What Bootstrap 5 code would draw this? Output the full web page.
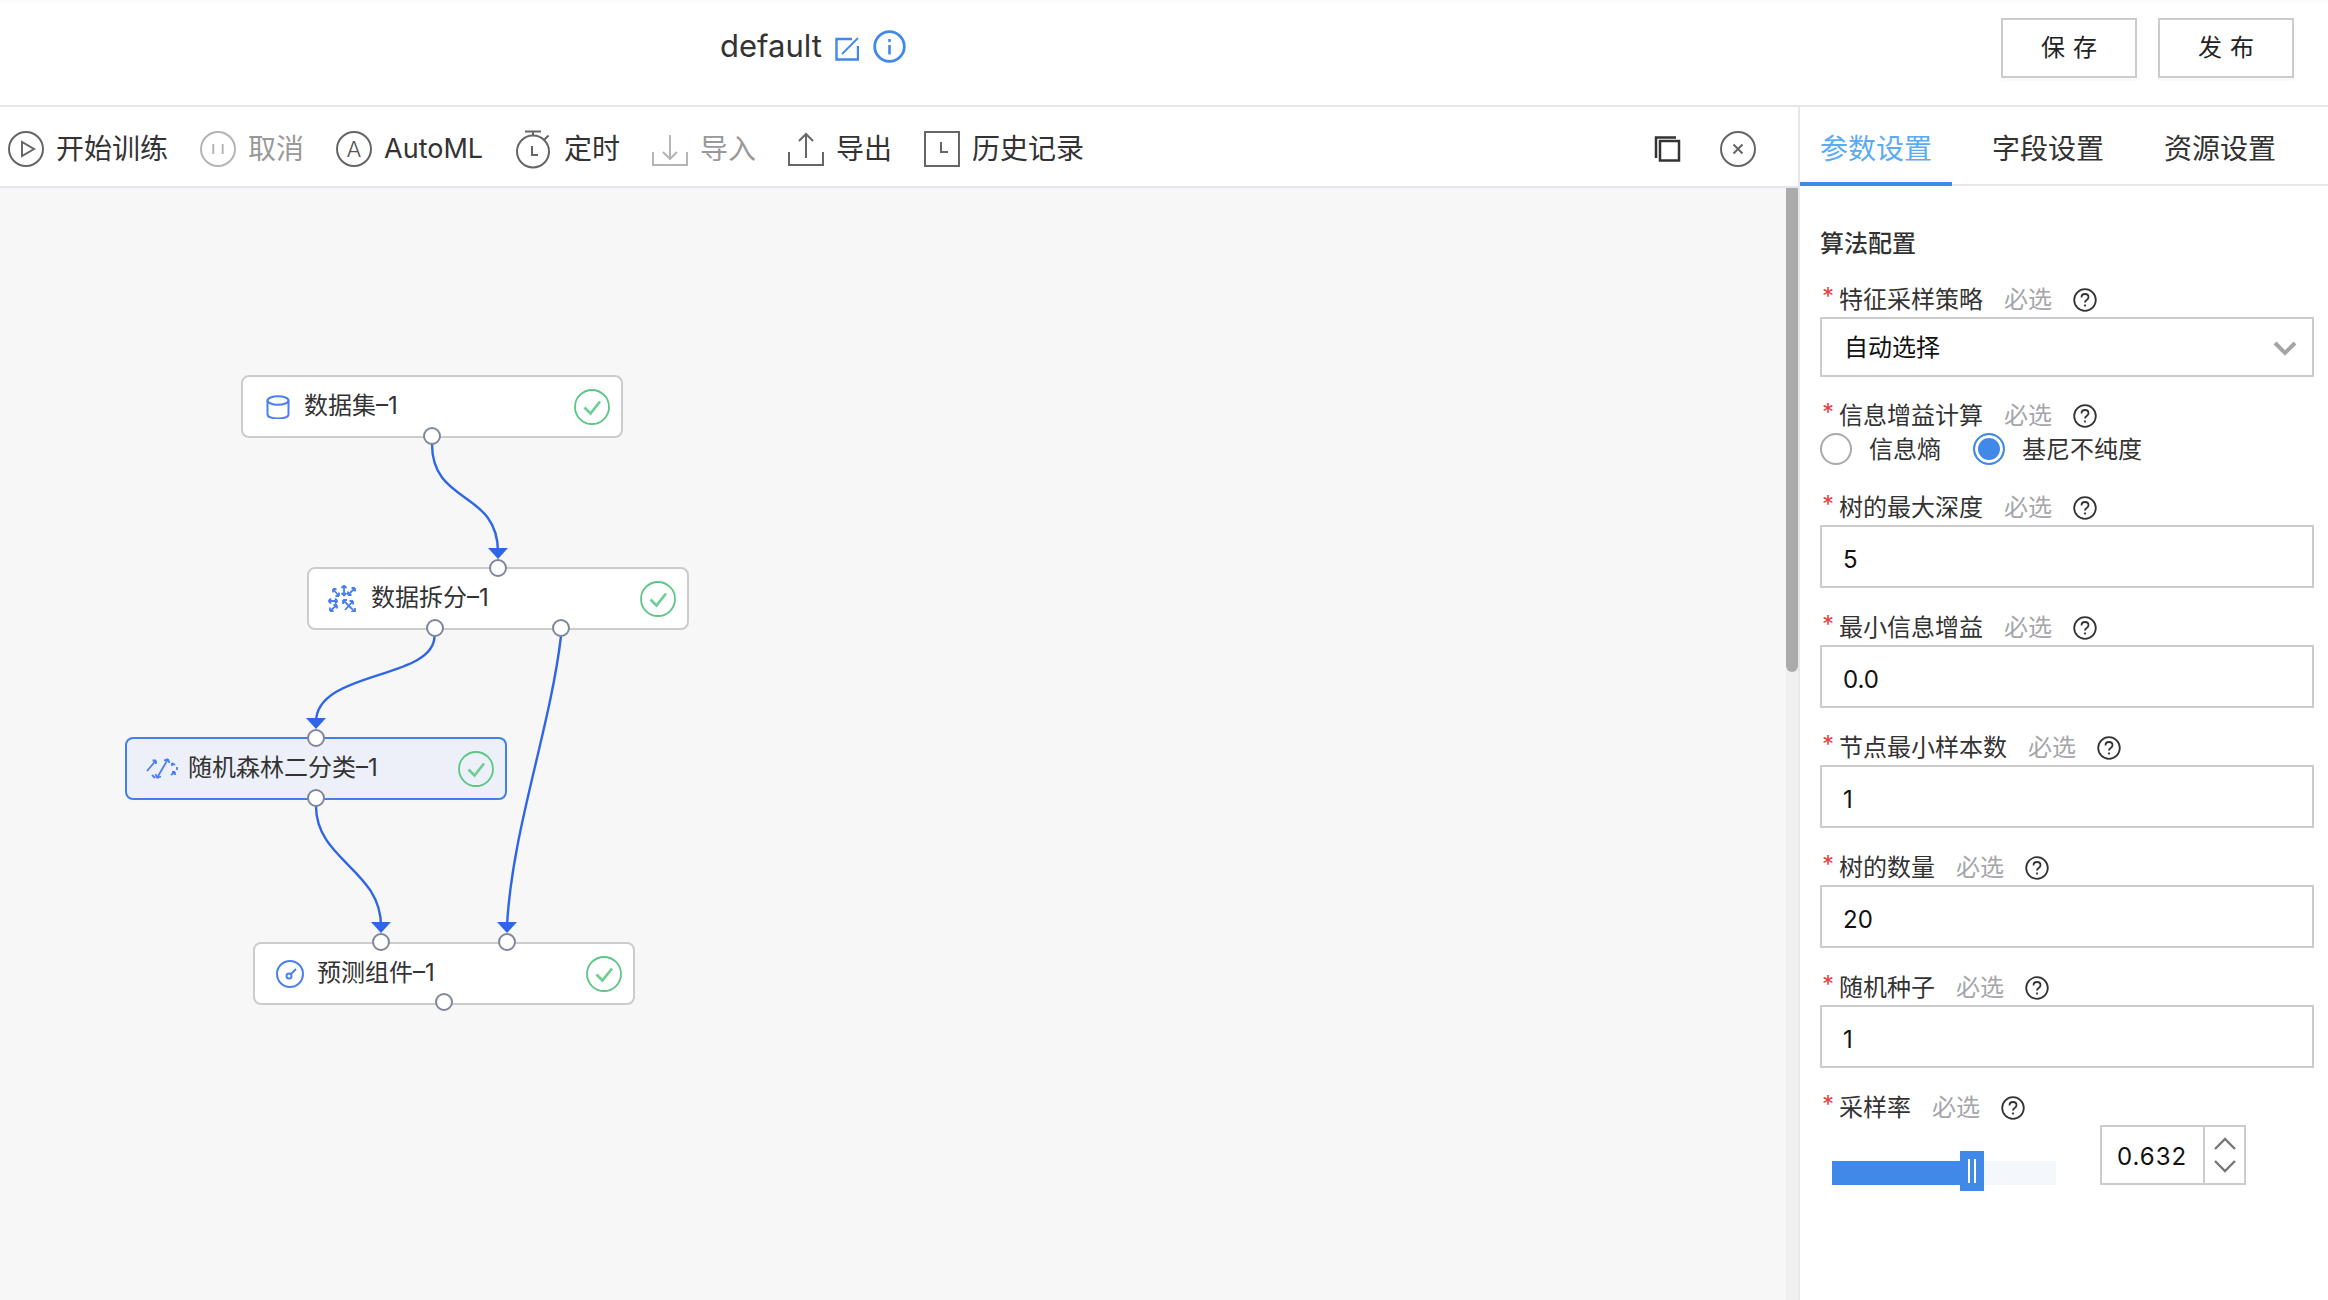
<!DOCTYPE html>
<html lang="zh"><head><meta charset="utf-8"><title>default</title>
<link href="https://cdn.jsdelivr.net/npm/bootstrap@5.3.0/dist/css/bootstrap.min.css" rel="stylesheet">
<style>
html,body{height:100%;overflow:hidden}
body{font-family:Inter,"Noto Sans CJK SC",sans-serif;font-size:24px;color:#333;background:#fff}
.app-top{height:107px;border-bottom:2px solid #e4e6ec;padding-right:34px;border-top:3px solid #fcfcfc;position:relative}
.top-gap{gap:21px}
.doc-title{position:absolute;left:720px;top:25px;font-size:31px;line-height:36px;color:#333}
.doc-edit{position:absolute;left:835px;top:34px}
.doc-info{position:absolute;left:873px;top:27px}
.top-btn{width:136px;height:60px;border:2px solid #ccc;border-radius:0;font-size:24px;color:#222;background:#fff;letter-spacing:8px;padding:0 0 0 8px;box-shadow:0 3px 0 #fafafa;margin-top:15px}
.work-area{height:1193px}
.left-side{width:1798px;flex:none}
.tool-row{height:81px;border-bottom:2px solid #e4e6ec;padding:5px 42px 0 8px}
.tool-item{font-size:28px;color:#333;gap:12px;margin-right:32px;white-space:nowrap}
.tool-off{color:#999}
.tool-latin{font-size:27px;margin-right:1px}
.tool-end{gap:39px}
.canvas-box{position:relative;height:1112px;background:#f7f7f7;overflow:hidden}
.edge-layer{position:absolute;left:0;top:-188px}
.flow-node{position:absolute;width:382px;height:63px;background:#fff;border:2px solid #ccc;border-radius:8px;display:flex;align-items:center;padding:0 11px 0 21px;font-size:24px;color:#333;line-height:1}
.flow-node.is-on{border-color:#4080ea;background:#edf0f8}
.flow-node.pad-a{padding-left:23px}
.flow-node.pad-b{padding-left:19px}
.flow-node .node-name{margin-left:14px;flex:1;position:relative;top:-1px}
.flow-port{position:absolute;width:18px;height:18px;border:2px solid #80879c;border-radius:50%;background:#fff;transform:translate(-50%,-50%);z-index:2}
.scroll-track{position:absolute;left:1786px;top:0;width:12px;height:100%;background:#f0f0f0}
.scroll-thumb{height:484px;background:#ababab;border-radius:0 0 6px 6px}
.side-panel{width:530px;flex:none;border-left:2px solid #e8e8e8}
.tab-row{height:79px;border-bottom:2px solid #e8e8e8;gap:20px;flex-wrap:nowrap}
.tab-link{width:152px;height:79px;text-align:center;font-size:28px;line-height:80px;padding:2px 0 0;color:#333;border-bottom:4px solid transparent;margin-bottom:-2px}
.tab-link:hover{color:#333}
.tab-link.active,.tab-link.active:hover{color:#5aabf5;border-bottom-color:#4089e8}
.form-pane{padding:0 14px 0 20px}
.pane-title{font-size:24px;font-weight:500;line-height:36px;color:#333;margin:40px 0 19px}
.field-label{height:36px;font-size:24px;line-height:36px;color:#333;padding-top:2px}
.req-mark{color:#e53f3f;width:19px;flex:none;font-size:24px;line-height:36px;position:relative;top:-3px;padding-left:2px}
.must-mark{color:#a5a5aa;margin-left:21px;margin-right:21px}
.form-control.field-box{height:63px;border:2px solid #ccc;border-radius:0;font-size:24px;color:#111;padding:6px 21px 0;margin-bottom:21px;box-shadow:none}
.form-control.pick-box{height:60px;padding:1px 15px 0 22px;margin-bottom:20px;display:flex;align-items:center;justify-content:space-between;color:#111;border:2px solid #ccc;border-radius:0;font-size:24px}
.radio-row{height:32px;margin-bottom:24px;line-height:32px}
.radio-row .form-check-input{width:32px;height:32px;margin:0;border:2px solid #aaa;flex:none;background-image:none}
.radio-row .form-check-input:checked{background:#4089e8;border-color:#4089e8;box-shadow:inset 0 0 0 3px #fff;background-image:none}
.radio-row label{margin:2px 32px 0 17px}
.rate-row{height:86px}
.rate-track{position:absolute;left:12px;top:36px;width:224px;height:24px;background:#f4f8fd}
.rate-fill{height:100%;background:#4089e8}
.rate-thumb{position:absolute;left:128px;top:-10px;width:24px;height:40px;background:#4089e8;display:flex;justify-content:center;gap:4px;padding:8px 0}
.rate-thumb i{display:block;width:2px;height:24px;background:#fff}
.rate-spin{position:absolute;left:280px;top:0;width:146px;height:60px;border:2px solid #ccc;display:flex}
.rate-val{width:103px;border-right:2px solid #ccc;font-size:24px;line-height:60px;color:#111;padding-left:15px;letter-spacing:1px}
.rate-arrows{flex:1;display:flex;flex-direction:column;align-items:center;justify-content:center;gap:8px}
</style></head>
<body>
<header class="app-top d-flex justify-content-end top-gap">
  <span class="doc-title">default</span>
  <svg class="doc-edit" width="24" height="24" viewBox="0 0 24 24" fill="none" stroke="#4089e8" stroke-width="2.400"><path d="M17 2H1.500V22.500H23V9"/><path d="M23 1 7 17" stroke-width="1.800"/></svg>
  <svg class="doc-info" width="33" height="33" viewBox="0 0 33 33" fill="none" stroke="#4089e8" stroke-width="2.800"><circle cx="16.500" cy="16.500" r="14.800"/><path d="M16.500 15v9.500M16.500 9v3" stroke-width="2.600"/></svg>
  <button class="btn top-btn" type="button">保存</button>
  <button class="btn top-btn" type="button">发布</button>
</header>
<main class="work-area d-flex">
  <section class="left-side d-flex flex-column">
    <div class="tool-row d-flex align-items-center">
      <span class="tool-item d-flex align-items-center"><svg width="36" height="36" viewBox="0 0 36 36" fill="none" stroke="#666" stroke-width="2"><circle cx="18" cy="18" r="17"/><path d="M14 11v14l12-7z"/></svg>开始训练</span>
      <span class="tool-item tool-off d-flex align-items-center"><svg width="36" height="36" viewBox="0 0 36 36" fill="none" stroke="#b5b5b5" stroke-width="2"><circle cx="18" cy="18" r="17"/><path d="M13.300 13v10M22.700 13v10"/></svg>取消</span>
      <span class="tool-item d-flex align-items-center"><svg width="36" height="36" viewBox="0 0 36 36" fill="none" stroke="#666" stroke-width="2"><circle cx="18" cy="18" r="17"/><text x="18" y="25.500" text-anchor="middle" font-family="Inter,sans-serif" font-size="22" font-weight="300" fill="#555" stroke="none">A</text></svg><span class="tool-latin">AutoML</span></span>
      <span class="tool-item d-flex align-items-center"><svg width="36" height="39" viewBox="0 0 36 39" fill="none" stroke="#666" stroke-width="2"><circle cx="17" cy="21.500" r="16"/><path d="M9 1.500h16M17 1.500v4M28 10l4.500-4.500M16 16v9h6"/></svg>定时</span>
      <span class="tool-item tool-off d-flex align-items-center"><svg width="36" height="36" viewBox="0 0 36 36" fill="none" stroke="#b5b5b5" stroke-width="2"><path d="M1 21v13h34V21"/><path d="M18 4v24M11 21l7 7 7-7"/></svg>导入</span>
      <span class="tool-item d-flex align-items-center"><svg width="36" height="36" viewBox="0 0 36 36" fill="none" stroke="#666" stroke-width="2"><path d="M1 21v13h34V21"/><path d="M18 27V3M11 10l7-7 7 7"/></svg>导出</span>
      <span class="tool-item d-flex align-items-center"><svg width="36" height="36" viewBox="0 0 36 36" fill="none" stroke="#666" stroke-width="2"><rect x="1" y="1" width="34" height="34"/><path d="M17 11v10h7"/></svg>历史记录</span>
      <span class="tool-end d-flex align-items-center ms-auto">
        <svg width="27" height="26" viewBox="0 0 27 26" fill="none" stroke="#333" stroke-width="2.500"><path d="M2 22V1.500H22"/><rect x="6" y="5" width="19" height="19.500"/></svg>
        <svg width="36" height="36" viewBox="0 0 36 36" fill="none" stroke="#666" stroke-width="2"><circle cx="18" cy="18" r="17"/><path d="M13.500 13.500l9 9M22.500 13.500l-9 9"/></svg>
      </span>
    </div>
    <div class="canvas-box">
      <svg class="edge-layer" width="1798" height="1300" viewBox="0 0 1798 1300" fill="none" stroke="#2f66e8" stroke-width="2.400">
        <path d="M432 444C432 505 498 490 498 552"/>
        <path d="M434.500 636C434.500 680 316 670 316 722"/>
        <path d="M561 636C550 730 512 830 507 926"/>
        <path d="M316 806C316 860 381 870 381 926"/>
        <g fill="#2f66e8" stroke="none">
          <path d="M488 548h20l-10 11z"/><path d="M306 718h20l-10 11z"/><path d="M371 922h20l-10 11z"/><path d="M497 922h20l-10 11z"/>
        </g>
      </svg>

      <div class="flow-node pad-a" style="left:241px;top:187px">
        <svg width="24" height="24" viewBox="0 0 24 24" fill="none" stroke="#4a7ff0" stroke-width="2"><ellipse cx="12" cy="5.500" rx="10.500" ry="4.300"/><path d="M1.500 5.500v14c0 2.400 4.700 3.900 10.500 3.900s10.500-1.500 10.500-3.900v-14"/></svg>
        <span class="node-name">数据集–1</span>
        <svg width="36" height="36" viewBox="0 0 36 36" fill="none" stroke="#5cc785" stroke-width="1.800"><circle cx="18" cy="18" r="17"/><path d="M10.500 18.500l6 6 9.500-12" stroke="#6dcf92" stroke-width="2.800"/></svg>
      </div>
      <div class="flow-node pad-b" style="left:307px;top:379px">
        <svg width="28" height="27" viewBox="0 0 28 27" fill="none" stroke="#4a7ff0" stroke-width="1.800"><path d="M5 4l6 7M5 4v3.500M5 4h3.500M11 11H7.500M11 11V7.500M16 0.500v10M13.500 3 16 .5 18.500 3M13.500 8l2.500 2.500L18.500 8M27 3l-7 7M27 3h-3.500M27 3v3.500M20 10h3.500M20 10V6.500M0.500 16h9M0.500 16 3 13.500M0.500 16 3 18.500M9.500 16 7 13.500M9.500 16 7 18.500M15 15l12 12M27 27h-4M27 27v-4M15 15v4M15 15h4M25 16 17 25M25 16h-3.500M25 16v3.500M2 26l7-6M2 26h3.500M2 26v-3.500M9 20H5.500M9 20v3.500"/></svg>
        <span class="node-name" style="margin-left:15px">数据拆分–1</span>
        <svg width="36" height="36" viewBox="0 0 36 36" fill="none" stroke="#5cc785" stroke-width="1.800"><circle cx="18" cy="18" r="17"/><path d="M10.500 18.500l6 6 9.500-12" stroke="#6dcf92" stroke-width="2.800"/></svg>
      </div>
      <div class="flow-node pad-b is-on" style="left:125px;top:549px">
        <svg width="32" height="21" viewBox="0 0 32 21" fill="none" stroke="#4a7ff0" stroke-width="1.800"><path d="M1 13 10 2.500M10 2.500H6.500M10 2.500V6M6 17l3 3M11 20 22 1M22 1l-4 1.500M22 1l1.500 4M11 20l-1.500-4M11 20l4-1.500M26 5l3 2M26 5v3M25 17l4-3M29 14h-3M29 14v3M31 9v3"/></svg>
        <span class="node-name" style="margin-left:10px">随机森林二分类–1</span>
        <svg width="36" height="36" viewBox="0 0 36 36" fill="none" stroke="#5cc785" stroke-width="1.800"><circle cx="18" cy="18" r="17"/><path d="M10.500 18.500l6 6 9.500-12" stroke="#6dcf92" stroke-width="2.800"/></svg>
      </div>
      <div class="flow-node" style="left:253px;top:754px">
        <svg width="28" height="28" viewBox="0 0 28 28" fill="none" stroke="#4a7ff0" stroke-width="2"><circle cx="14" cy="14" r="13"/><circle cx="13" cy="16" r="2.500"/><path d="M15 14l5-5"/></svg>
        <span class="node-name" style="margin-left:13px">预测组件–1</span>
        <svg width="36" height="36" viewBox="0 0 36 36" fill="none" stroke="#5cc785" stroke-width="1.800"><circle cx="18" cy="18" r="17"/><path d="M10.500 18.500l6 6 9.500-12" stroke="#6dcf92" stroke-width="2.800"/></svg>
      </div>

      <span class="flow-port" style="left:432px;top:248px"></span>
      <span class="flow-port" style="left:498px;top:380px"></span>
      <span class="flow-port" style="left:434.500px;top:440px"></span>
      <span class="flow-port" style="left:561px;top:440px"></span>
      <span class="flow-port" style="left:316px;top:550px"></span>
      <span class="flow-port" style="left:316px;top:610px"></span>
      <span class="flow-port" style="left:381px;top:754px"></span>
      <span class="flow-port" style="left:507px;top:754px"></span>
      <span class="flow-port" style="left:444px;top:814px"></span>

      <div class="scroll-track"><div class="scroll-thumb"></div></div>
    </div>
  </section>
  <aside class="side-panel">
    <nav class="nav tab-row">
      <a class="nav-link tab-link active" href="#">参数设置</a>
      <a class="nav-link tab-link" href="#">字段设置</a>
      <a class="nav-link tab-link" href="#">资源设置</a>
    </nav>
    <form class="form-pane">
      <div class="pane-title">算法配置</div>

      <div class="field-label d-flex align-items-center"><span class="req-mark">*</span><span>特征采样策略</span><span class="must-mark">必选</span><svg width="24" height="24" viewBox="0 0 24 24" fill="none" stroke="#333" stroke-width="1.800"><circle cx="12" cy="12" r="10.800"/><path d="M8.500 9.500c0-2.200 1.600-3.500 3.500-3.500s3.500 1.300 3.500 3.300c0 2.700-3.500 2.700-3.500 5.200M12 16.500v2"/></svg></div>
      <div class="form-control pick-box"><span>自动选择</span><svg width="24" height="16" viewBox="0 0 24 16" fill="none" stroke="#a5a5a5" stroke-width="4"><path d="M2 3l10 10L22 3"/></svg></div>

      <div class="field-label d-flex align-items-center"><span class="req-mark">*</span><span>信息增益计算</span><span class="must-mark">必选</span><svg width="24" height="24" viewBox="0 0 24 24" fill="none" stroke="#333" stroke-width="1.800"><circle cx="12" cy="12" r="10.800"/><path d="M8.500 9.500c0-2.200 1.600-3.500 3.500-3.500s3.500 1.300 3.500 3.300c0 2.700-3.500 2.700-3.500 5.200M12 16.500v2"/></svg></div>
      <div class="radio-row d-flex align-items-center">
        <input class="form-check-input" type="radio" name="gain" id="gain1"><label for="gain1">信息熵</label>
        <input class="form-check-input" type="radio" name="gain" id="gain2" checked><label for="gain2">基尼不纯度</label>
      </div>

      <div class="field-label d-flex align-items-center"><span class="req-mark">*</span><span>树的最大深度</span><span class="must-mark">必选</span><svg width="24" height="24" viewBox="0 0 24 24" fill="none" stroke="#333" stroke-width="1.800"><circle cx="12" cy="12" r="10.800"/><path d="M8.500 9.500c0-2.200 1.600-3.500 3.500-3.500s3.500 1.300 3.500 3.300c0 2.700-3.500 2.700-3.500 5.200M12 16.500v2"/></svg></div>
      <input class="form-control field-box" value="5">

      <div class="field-label d-flex align-items-center"><span class="req-mark">*</span><span>最小信息增益</span><span class="must-mark">必选</span><svg width="24" height="24" viewBox="0 0 24 24" fill="none" stroke="#333" stroke-width="1.800"><circle cx="12" cy="12" r="10.800"/><path d="M8.500 9.500c0-2.200 1.600-3.500 3.500-3.500s3.500 1.300 3.500 3.300c0 2.700-3.500 2.700-3.500 5.200M12 16.500v2"/></svg></div>
      <input class="form-control field-box" value="0.0">

      <div class="field-label d-flex align-items-center"><span class="req-mark">*</span><span>节点最小样本数</span><span class="must-mark">必选</span><svg width="24" height="24" viewBox="0 0 24 24" fill="none" stroke="#333" stroke-width="1.800"><circle cx="12" cy="12" r="10.800"/><path d="M8.500 9.500c0-2.200 1.600-3.500 3.500-3.500s3.500 1.300 3.500 3.300c0 2.700-3.500 2.700-3.500 5.200M12 16.500v2"/></svg></div>
      <input class="form-control field-box" value="1">

      <div class="field-label d-flex align-items-center"><span class="req-mark">*</span><span>树的数量</span><span class="must-mark">必选</span><svg width="24" height="24" viewBox="0 0 24 24" fill="none" stroke="#333" stroke-width="1.800"><circle cx="12" cy="12" r="10.800"/><path d="M8.500 9.500c0-2.200 1.600-3.500 3.500-3.500s3.500 1.300 3.500 3.300c0 2.700-3.500 2.700-3.500 5.200M12 16.500v2"/></svg></div>
      <input class="form-control field-box" value="20">

      <div class="field-label d-flex align-items-center"><span class="req-mark">*</span><span>随机种子</span><span class="must-mark">必选</span><svg width="24" height="24" viewBox="0 0 24 24" fill="none" stroke="#333" stroke-width="1.800"><circle cx="12" cy="12" r="10.800"/><path d="M8.500 9.500c0-2.200 1.600-3.500 3.500-3.500s3.500 1.300 3.500 3.300c0 2.700-3.500 2.700-3.500 5.200M12 16.500v2"/></svg></div>
      <input class="form-control field-box" value="1">

      <div class="field-label d-flex align-items-center"><span class="req-mark">*</span><span>采样率</span><span class="must-mark">必选</span><svg width="24" height="24" viewBox="0 0 24 24" fill="none" stroke="#333" stroke-width="1.800"><circle cx="12" cy="12" r="10.800"/><path d="M8.500 9.500c0-2.200 1.600-3.500 3.500-3.500s3.500 1.300 3.500 3.300c0 2.700-3.500 2.700-3.500 5.200M12 16.500v2"/></svg></div>
      <div class="rate-row position-relative">
        <div class="rate-track"><div class="rate-fill" style="width:63.200%"></div><div class="rate-thumb"><i></i><i></i></div></div>
        <div class="rate-spin"><div class="rate-val">0.632</div><div class="rate-arrows"><svg width="22" height="14" viewBox="0 0 22 14" fill="none" stroke="#777" stroke-width="2.400"><path d="M1 12 11 2l10 10"/></svg><svg width="22" height="14" viewBox="0 0 22 14" fill="none" stroke="#777" stroke-width="2.400"><path d="M1 2l10 10L21 2"/></svg></div></div>
      </div>
    </form>
  </aside>
</main>
</body></html>
